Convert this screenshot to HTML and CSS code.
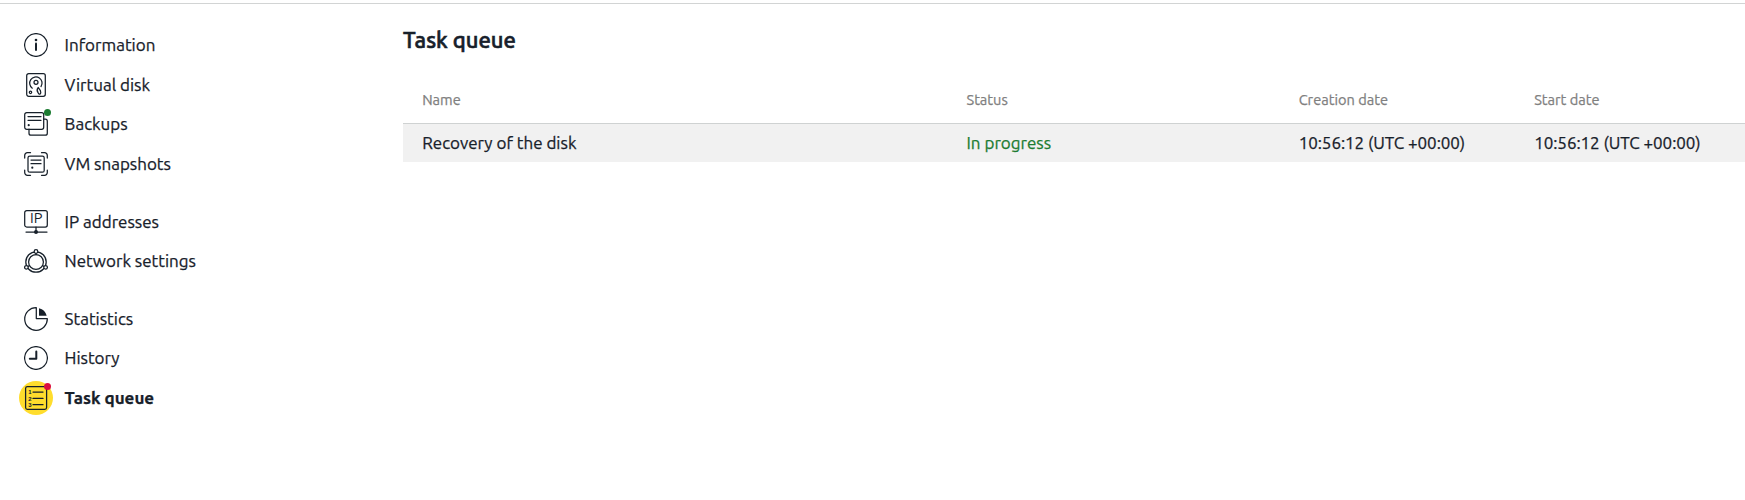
FILE: index.html
```
<!DOCTYPE html>
<html lang="en">
<head>
<meta charset="utf-8">
<title>Task queue</title>
<link rel="stylesheet" href="styles.css">
</head>
<body>
<div class="page">
  <nav class="sidebar">
    <ul class="group">
      <li class="item"><span class="icon"><svg viewBox="0 0 24 24"><circle cx="12" cy="12" r="11.4"/><path class="heavy" d="M12 10.4V17"/><circle class="solid" cx="12" cy="7" r="1.3"/></svg></span><span class="label">Information</span></li>
      <li class="item"><span class="icon"><svg viewBox="0 0 24 24"><rect x="2.7" y=".7" width="18.6" height="22.6" rx="2"/><path d="M8.3 15.2A6.2 6.2 0 1 1 17 13.6M14.3 14.5C12.6 16.5 12.8 18 14 19.5c.8 1.6 1.2 2 2.2 1.4 1-.7.7-1.8.2-3.2z"/><circle cx="12" cy="9.3" r="2"/><circle cx="6.5" cy="19.3" r="1.2"/></svg></span><span class="label">Virtual disk</span></li>
      <li class="item"><span class="icon"><svg viewBox="0 0 24 24"><rect x=".7" y=".7" width="19" height="16.6" rx="2"/><path d="M4 4.5h13M4 8.3h13M19.8 7.2h1.5a2 2 0 0 1 2 2v12a2 2 0 0 1-2 2H7a2 2 0 0 1-2-2v-4"/><circle class="solid" cx="4.7" cy="13.2" r="1.1"/></svg><i class="badge badge-green"></i></span><span class="label">Backups</span></li>
      <li class="item"><span class="icon"><svg viewBox="0 0 24 24"><rect x="4" y="4" width="16.2" height="16.2" rx="1.8"/><path d="M.7 6V3.4A2.7 2.7 0 0 1 3.4.7H6.5M17.5.7h3.1a2.7 2.7 0 0 1 2.7 2.7V6M23.3 18v2.6a2.7 2.7 0 0 1-2.7 2.7h-3.1M6.5 23.3H3.4a2.7 2.7 0 0 1-2.7-2.7V18M7 8h10M7 11.7h10"/><circle class="solid" cx="8.3" cy="15.7" r="1.1"/></svg></span><span class="label">VM snapshots</span></li>
    </ul>
    <ul class="group">
      <li class="item"><span class="icon"><svg viewBox="0 0 24 24"><rect x=".7" y=".7" width="22.6" height="16.3" rx="2"/><path d="M2 22h21M12 17v5"/><circle class="solid" cx="12" cy="22" r="2"/><text x="12.2" y="13.4">IP</text></svg></span><span class="label">IP addresses</span></li>
      <li class="item"><span class="icon"><svg viewBox="0 0 24 24"><circle cx="12" cy="13" r="10.2"/><circle cx="12" cy="13" r="7.4"/><path d="M12 4v1.7M4 17.5l1.5-.9M20 17.5l-1.5-.9"/><circle class="node" cx="12" cy="2.5" r="1.8"/><circle class="node" cx="2.4" cy="18.3" r="1.8"/><circle class="node" cx="21.6" cy="18.3" r="1.8"/></svg></span><span class="label">Network settings</span></li>
    </ul>
    <ul class="group">
      <li class="item"><span class="icon"><svg viewBox="0 0 24 24"><path d="M12.3.7A11.3 11.3 0 1 0 23.3 11.5H12.3z"/><path class="solid" d="M15 1.2v7.5h7.7A10.6 10.6 0 0 0 15 1.2z"/></svg></span><span class="label">Statistics</span></li>
      <li class="item"><span class="icon"><svg viewBox="0 0 24 24"><circle cx="12" cy="12" r="11.4"/><path class="heavy" d="M12.3 5.5v7.2H5.8"/></svg></span><span class="label">History</span></li>
      <li class="item active"><span class="icon"><svg viewBox="0 0 24 24"><rect x="1.6" y=".7" width="21" height="22.6" rx="1.8"/><path d="M9 6h10M9 12.4h10M9 18.7h10"/><text class="digit" x="5.8" y="8">1</text><text class="digit" x="5.8" y="14.6">2</text><text class="digit" x="5.8" y="20.9">3</text></svg><i class="badge badge-red"></i></span><span class="label">Task queue</span></li>
    </ul>
  </nav>
  <main class="content">
    <h1 class="title">Task queue</h1>
    <div class="row head"><span>Name</span><span>Status</span><span>Creation date</span><span>Start date</span></div>
    <div class="row task"><span>Recovery of the disk</span><span class="progress">In progress</span><span class="time">10:56:12 (UTC +00:00)</span><span class="time">10:56:12 (UTC +00:00)</span></div>
  </main>
</div>
</body>
</html>
```
FILE: styles.css
```
* { box-sizing: border-box; }
body {
  margin: 0;
  background: #fff;
  color: #17202a;
  font: 17px/20px Ubuntu, "Noto Sans", sans-serif;
  -webkit-text-stroke: 0.25px currentColor;
  overflow: hidden;
}
.page {
  display: flex;
  height: 497px;
  margin-top: 3px;
  border-top: 1px solid #d2d4d4;
}
.sidebar {
  width: 403px;
  flex: none;
  padding: 21.4px 0 0 24px;
}
.group { list-style: none; margin: 0 0 18.4px; padding: 0; }
.item { display: flex; align-items: center; gap: 16.6px; height: 39.5px; }
.icon { position: relative; width: 24px; height: 24px; flex: none; }
.icon svg {
  position: relative;
  display: block;
  width: 24px;
  height: 24px;
  fill: none;
  stroke: #17202a;
  stroke-width: 1.25;
  stroke-linecap: round;
  stroke-linejoin: round;
}
.icon .heavy { stroke-width: 2; }
.icon .solid { fill: #17202a; stroke: none; }
.icon .node { fill: #fff; }
.icon text { font-size: 14.5px; fill: #17202a; stroke: none; text-anchor: middle; font-weight: 400; -webkit-text-stroke: 0; }
.icon .digit { font: 700 6px "Liberation Sans", sans-serif; }
.active { font-weight: 700; }
.active .icon::before {
  content: "";
  position: absolute;
  inset: -5px;
  border-radius: 50%;
  background: #ffdd2d;
}
.badge { position: absolute; top: -3px; right: -3px; width: 7px; height: 7px; border-radius: 50%; }
.badge-green { background: #1c7c32; }
.badge-red { background: #dc0f3f; }
.content { flex: 1; min-width: 0; }
.title { margin: 22px 0 0; font-size: 22px; line-height: 28px; font-weight: 500; -webkit-text-stroke-width: 0.6px; }
.row {
  display: grid;
  grid-template-columns: 544.3px 332.2px 235.5px 1fr;
  align-items: center;
  padding-left: 19.2px;
  white-space: nowrap;
}
.head { height: 48px; margin-top: 22px; font-size: 14.6px; color: #808080; border-bottom: 1px solid #cfd2d2; }
.task { height: 38px; background: #f1f1f1; }
.progress { color: #1c7c32; }
.time { letter-spacing: -0.06px; }
```
